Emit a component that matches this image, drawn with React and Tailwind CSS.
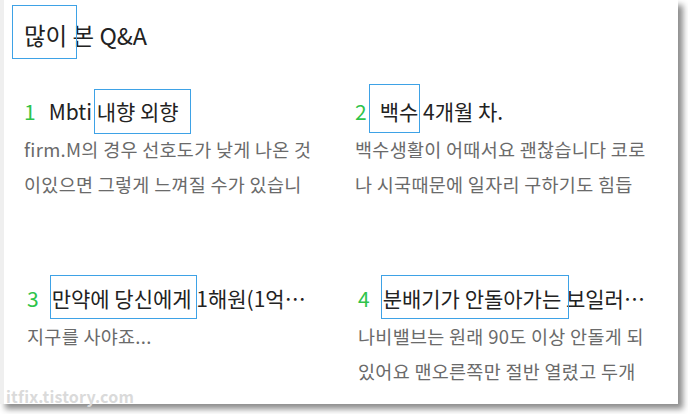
const FONT = { fontFamily: '"Noto Sans CJK KR", "Noto Sans", sans-serif' };

// annotation box drawn over a piece of text
function Mark({ children, box }) {
  return (
    <span className="relative inline-block leading-[1em]">
      {children}
      <span className={`absolute border-[1.5px] border-[#3ea2e6] pointer-events-none ${box}`} />
    </span>
  );
}

const items = [
  {
    no: "1",
    title: (
      <>
        Mbti <Mark box="-left-[3px] -right-[12px] -top-[12px] -bottom-[12px]">내향 외향</Mark>
      </>
    ),
    lines: ["firm.M의 경우 선호도가 낮게 나온 것", "이있으면 그렇게 느껴질 수가 있습니"],
    shift: "",
  },
  {
    no: "2",
    title: (
      <>
        <Mark box="-left-[11px] -right-[2px] -top-[17px] -bottom-[11px]">백수</Mark> 4개월 차.
      </>
    ),
    lines: ["백수생활이 어때서요 괜찮습니다 코로", "나 시국때문에 일자리 구하기도 힘듭"],
    shift: "",
  },
  {
    no: "3",
    title: (
      <>
        <Mark box="-left-[2px] -right-[5px] -top-[13px] -bottom-[10px]">만약에 당신에게</Mark> 1해원(1억…
      </>
    ),
    lines: ["지구를 사야죠..."],
    shift: "ml-[3px]",
  },
  {
    no: "4",
    title: (
      <>
        <Mark box="-left-[2px] -right-[8px] -top-[13px] -bottom-[10px]">분배기가 안돌아가는</Mark> 보일러…
      </>
    ),
    lines: ["나비밸브는 원래 90도 이상 안돌게 되", "있어요 맨오른쪽만 절반 열렸고 두개"],
    shift: "ml-[3px]",
  },
];

function Item({ item }) {
  return (
    <div className={`w-[300px] ${item.shift}`}>
      <div className="flex items-center h-[21px] text-[21px] leading-[21px] text-[#222] whitespace-nowrap">
        <span className="text-[#2ec34a] mr-[13px] shrink-0">{item.no}</span>
        <span>{item.title}</span>
      </div>
      <div className="mt-[10px] text-[18.5px] tracking-[0.3px] text-[#6a6a6a]">
        {item.lines.map((l) => (
          <div key={l} className="whitespace-nowrap h-[35px] leading-[35px]">
            {l}
          </div>
        ))}
      </div>
    </div>
  );
}

export default function App() {
  return (
    <div className="w-[688px] h-[414px] bg-white overflow-hidden" style={FONT}>
      <div className="relative w-[678px] h-[404px] bg-white border-l-[4px] border-[#efefef] shadow-[5px_5px_6px_rgba(0,0,0,0.45)]">
        <div className="pl-[20px] pt-[23px]">
          <h2 className="text-[23.5px] leading-[24px] text-[#222] font-normal">
            <Mark box="-left-[12px] -right-[10px] -top-[19px] -bottom-[11px]">많이</Mark> 본 Q&amp;A
          </h2>
          <div className="grid grid-cols-[300px_300px] gap-x-[31px] mt-[53px]">
            <Item item={items[0]} />
            <Item item={items[1]} />
          </div>
          <div className="grid grid-cols-[300px_300px] gap-x-[31px] mt-[86px]">
            <Item item={items[2]} />
            <Item item={items[3]} />
          </div>
        </div>
        <div className="absolute left-[2px] bottom-[0px] text-[16px] leading-[16px] font-bold text-[#dadada] tracking-[0.2px]">
          itfix.tistory.com
        </div>
      </div>
    </div>
  );
}
